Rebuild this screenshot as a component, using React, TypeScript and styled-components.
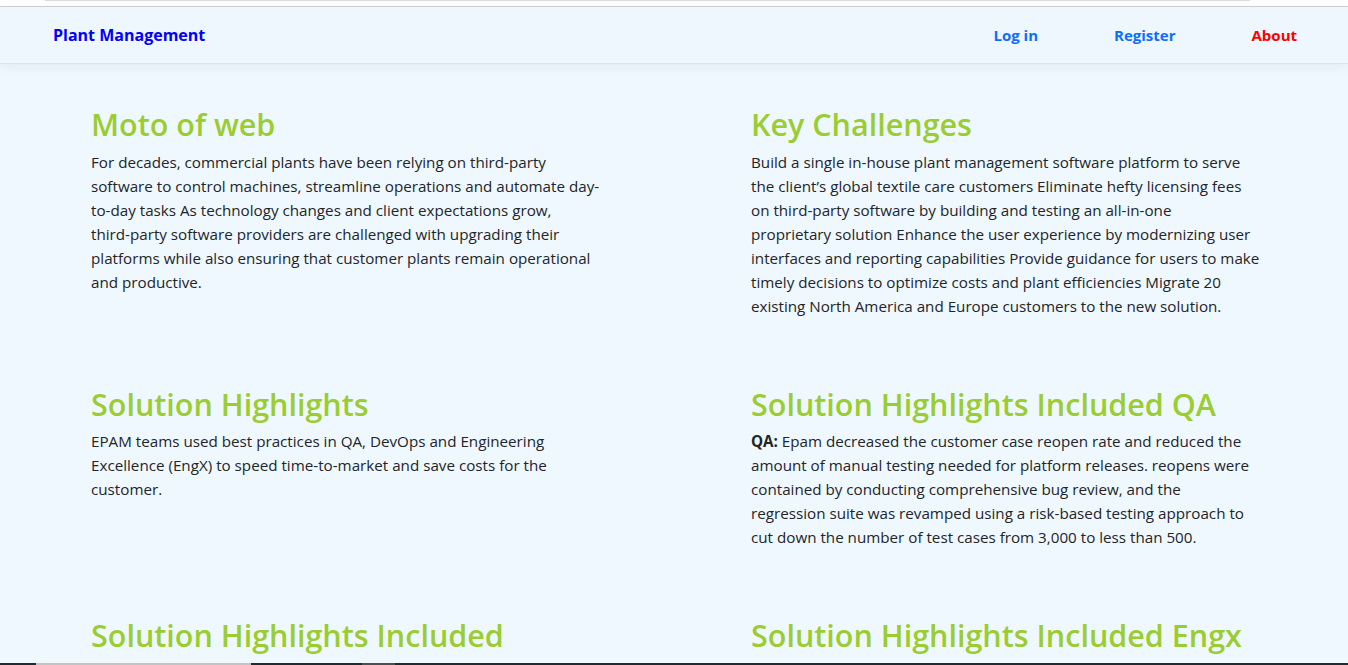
import React from "react";
import styled, { createGlobalStyle } from "styled-components";

const Global = createGlobalStyle`
  html, body { margin: 0; padding: 0; }
  body {
    background: #f0f8ff;
    font-family: "Open Sans", "Noto Sans", sans-serif;
    color: #212529;
    overflow: hidden;
  }
`;

const Page = styled.div`
  height: 665px;
  display: flex;
  flex-direction: column;
  overflow: hidden;
`;

const TopStrip = styled.div`
  height: 6px;
  background: #ffffff;
  border-bottom: 1px solid #cfcfcf;
  display: flex;
  padding-left: 45px;
  flex-shrink: 0;
`;

const TopBar = styled.div`
  width: 1205px;
  height: 1px;
  background: #dcdcdc;
`;

const Nav = styled.nav`
  height: 56px;
  flex-shrink: 0;
  background: #eef6fe;
  border-bottom: 1px solid #dde3ea;
  box-shadow: 0 3px 10px rgba(120, 140, 170, 0.12);
  display: flex;
  align-items: center;
  justify-content: space-between;
  padding: 0 51px 0 53px;
  position: relative;
  z-index: 1;
`;

const Brand = styled.a`
  font-weight: 700;
  font-size: 16px;
  color: #0000ff;
  text-decoration: none;
`;

const Links = styled.div`
  display: flex;
  gap: 76px;
`;

const NavLink = styled.a<{ $red?: boolean }>`
  font-weight: 700;
  font-size: 15px;
  color: ${(p) => (p.$red ? "#ff0000" : "#0d6efd")};
  text-decoration: none;
`;

const Main = styled.main`
  flex: 1;
  display: grid;
  grid-template-columns: 520px 520px;
  column-gap: 140px;
  row-gap: 68px;
  padding: 42px 0 0 91px;
  align-content: start;
`;

const Section = styled.section``;

const Heading = styled.h2`
  margin: 0 0 7px;
  font-size: 30.5px;
  font-weight: 600;
  line-height: 1.2;
  color: #9acd32;
`;

const Text = styled.p`
  margin: 0;
  font-size: 15.2px;
  line-height: 24px;
`;

const Line = styled.span`
  display: block;
  white-space: nowrap;
`;

const Bottom = styled.div`
  height: 2px;
  flex-shrink: 0;
  display: flex;
`;

const Seg = styled.div<{ $w: number; $c: string }>`
  width: ${(p) => p.$w}px;
  background: ${(p) => p.$c};
`;

type Block = { title: string; lines?: React.ReactNode[] };

const blocks: Block[] = [
  {
    title: "Moto of web",
    lines: [
      "For decades, commercial plants have been relying on third-party",
      "software to control machines, streamline operations and automate day-",
      "to-day tasks As technology changes and client expectations grow,",
      "third-party software providers are challenged with upgrading their",
      "platforms while also ensuring that customer plants remain operational",
      "and productive.",
    ],
  },
  {
    title: "Key Challenges",
    lines: [
      "Build a single in-house plant management software platform to serve",
      "the client’s global textile care customers Eliminate hefty licensing fees",
      "on third-party software by building and testing an all-in-one",
      "proprietary solution Enhance the user experience by modernizing user",
      "interfaces and reporting capabilities Provide guidance for users to make",
      "timely decisions to optimize costs and plant efficiencies Migrate 20",
      "existing North America and Europe customers to the new solution.",
    ],
  },
  {
    title: "Solution Highlights",
    lines: [
      "EPAM teams used best practices in QA, DevOps and Engineering",
      "Excellence (EngX) to speed time-to-market and save costs for the",
      "customer.",
    ],
  },
  {
    title: "Solution Highlights Included QA",
    lines: [
      <>
        <b>QA:</b> Epam decreased the customer case reopen rate and reduced the
      </>,
      "amount of manual testing needed for platform releases. reopens were",
      "contained by conducting comprehensive bug review, and the",
      "regression suite was revamped using a risk-based testing approach to",
      "cut down the number of test cases from 3,000 to less than 500.",
    ],
  },
  { title: "Solution Highlights Included" },
  { title: "Solution Highlights Included Engx" },
];

export default function App() {
  return (
    <>
      <Global />
      <Page>
        <TopStrip>
          <TopBar />
        </TopStrip>
        <Nav>
          <Brand href="#">Plant Management</Brand>
          <Links>
            <NavLink href="#">Log in</NavLink>
            <NavLink href="#">Register</NavLink>
            <NavLink href="#" $red>About</NavLink>
          </Links>
        </Nav>
        <Main>
          {blocks.map((b) => (
            <Section key={b.title}>
              <Heading>{b.title}</Heading>
              {b.lines && (
                <Text>
                  {b.lines.map((l, i) => (
                    <Line key={i}>{l}</Line>
                  ))}
                </Text>
              )}
            </Section>
          ))}
        </Main>
        <Bottom>
          <Seg $w={36} $c="#1f2b31" />
          <Seg $w={215} $c="#c4c4c4" />
          <Seg $w={111} $c="#1f2b31" />
          <Seg $w={33} $c="#4a4f52" />
          <Seg $w={953} $c="#1f2b31" />
        </Bottom>
      </Page>
    </>
  );
}
